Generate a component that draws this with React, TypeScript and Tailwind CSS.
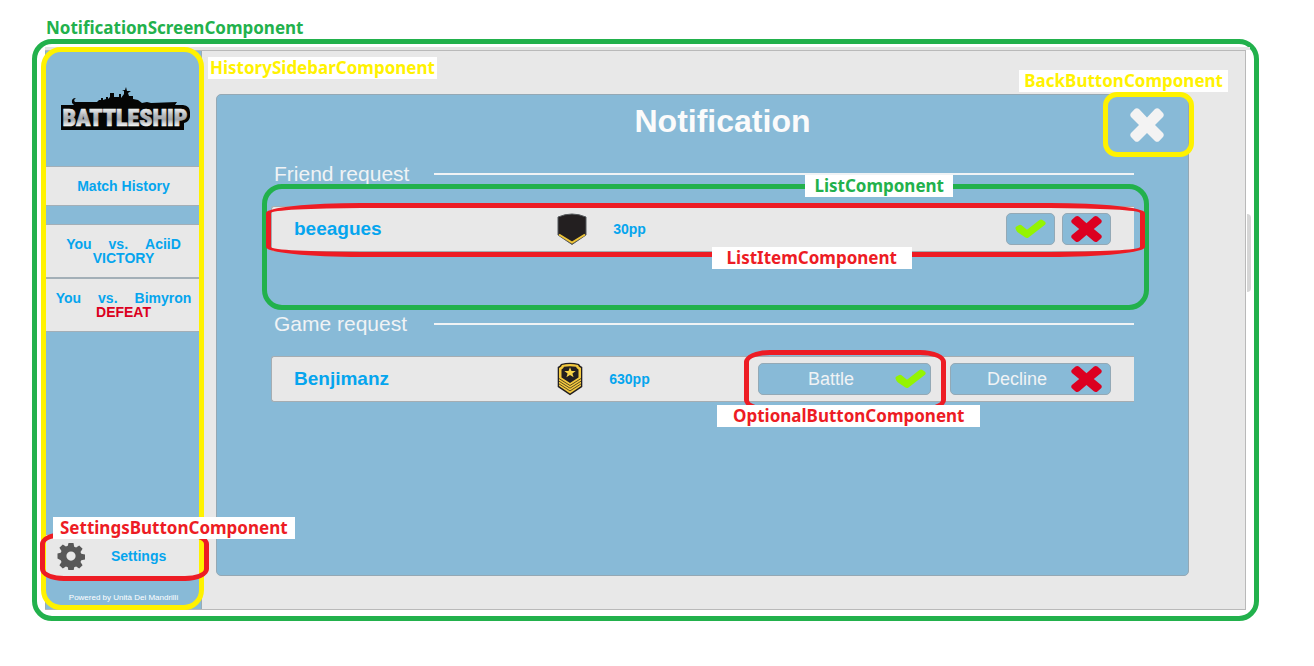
import type { ReactNode } from "react";

const LABEL = "pointer-events-none absolute z-30 whitespace-nowrap bg-white font-['Noto_Sans','Open_Sans',sans-serif] text-[17px] font-bold leading-[22px]";

function Outline({ className }: { className: string }) {
  return <span aria-hidden="true" className={`pointer-events-none absolute border-[5px] ${className}`} />;
}

function Logo() {
  return (
    <svg viewBox="0 0 132 48" className="h-12 w-[132px]" role="img" aria-label="Battleship">
      <defs>
        <linearGradient id="steel" gradientUnits="userSpaceOnUse" x1="0" y1="23" x2="0" y2="42">
          <stop offset="0" stopColor="#f4f5f6" />
          <stop offset="0.35" stopColor="#b9bdc1" />
          <stop offset="0.6" stopColor="#a3a8ad" />
          <stop offset="1" stopColor="#ffffff" />
        </linearGradient>
      </defs>
      <path
        d="M2 20H15L13 18Q12 13 17 13Q14 15 16 17L38 17L40 15H42V13H44V15L47 14V12H49V14L51 12V8H55V12H60V9H62V13L65 9V6L63 5L66 5L67 2L68 6L72 6L69 8L70 11L74 11V14L79 15L83 18L88 17L92 18L118 17L116 20H124Q131 21 131 27V32Q130 37 125 38V45H2Z"
        fill="#050505"
      />
      <text
        x="66"
        y="41"
        textAnchor="middle"
        fontFamily="'Liberation Sans Narrow','Roboto Condensed','Liberation Sans',sans-serif"
        fontWeight="900"
        fontSize="24"
        fill="url(#steel)"
        stroke="url(#steel)"
        strokeWidth="0.7"
      >
        BATTLESHIP
      </text>
    </svg>
  );
}

function Gear() {
  return (
    <svg viewBox="0 0 28 28" className="size-7" fill="#585858" aria-hidden="true">
      <path
        fillRule="evenodd"
        d="M11.5 1h5l.7 3.7 1.9.8 3.1-2.1 3.4 3.4-2.1 3.1.8 1.9 3.7.7v5l-3.7.7-.8 1.9 2.1 3.1-3.4 3.4-3.1-2.1-1.9.8-.7 3.7h-5l-.7-3.7-1.9-.8-3.1 2.1-3.4-3.4 2.1-3.1-.8-1.9L.5 16.500v-5l3.200-.7.8-1.900L2.400 5.800l3.400-3.400 3.100 2.100 1.900-.8zM14 9.500a4.600 4.600 0 1 0 0 9.200a4.600 4.600 0 1 0 0-9.200z"
      />
    </svg>
  );
}

function Cross({ className }: { className: string }) {
  return (
    <svg viewBox="0 0 34 34" preserveAspectRatio="none" className={className} fill="currentColor" aria-hidden="true">
      <path d="M5 .8Q7-.6 9 1L17 9.500L25 1Q27-.6 29 .8L33 5Q34.500 7 33 9L25 17L33 25Q34.500 27 33 29L29 33.200Q27 34.600 25 33L17 25L9 33Q7 34.600 5 33.200L1 29Q-.5 27 1 25L9 17L1 9Q-.5 7 1 5Z" />
    </svg>
  );
}

function Check() {
  return (
    <svg viewBox="0 0 31 20" className="h-5 w-[31px] text-[#94f400]" fill="currentColor" aria-hidden="true">
      <path d="M.6 9.800Q0 8.400 1.400 7.600L4.200 6Q5.400 5.400 6.500 6.300L12 10.800L24.500 1Q26 0 27.500 1L30 2.800Q31.400 4 30 5.800L13.500 18.500Q12 19.600 10.500 18.600L3 13.600Q1.200 12 .6 9.800Z" />
    </svg>
  );
}

function PrivateBadge() {
  return (
    <svg viewBox="0 0 30 32" className="h-8 w-[30px]" role="img" aria-label="Rank: private">
      <path d="M1 4Q8 1 15 1T29 4V22L15 31.500L1 22Z" fill="#231f20" stroke="#55595c" strokeWidth="1" />
      <path d="M2 21.500L15 29.500L28 21.500" fill="none" stroke="#f0c63a" strokeWidth="2" />
    </svg>
  );
}

function SergeantBadge() {
  return (
    <svg viewBox="0 0 26 34" className="h-[34px] w-[26px]" role="img" aria-label="Rank: sergeant">
      <path d="M.7 5Q3 4 4 2Q13-.4 22 2Q23 4 25.300 5V25L13 33.300L.7 25Z" fill="#231f20" />
      <path d="M2 6Q4.500 5 5 3Q13 1 21 3Q21.500 5 24 6V24L13 31.500L2 24Z" fill="#f3c93f" />
      <path d="M4.500 7.500Q6.500 6.500 7 4.800Q13 3.500 19 4.800Q19.500 6.500 21.500 7.500V15.500L13 21L4.500 15.500Z" fill="#231f20" />
      <path d="M13 5.300L14.500 9H18.700L15.400 11.400L16.600 15.200L13 12.900L9.400 15.200L10.600 11.400L7.300 9H11.500Z" fill="#f8d348" />
      <path d="M2 16.500L13 23.500L24 16.500M2 19.200L13 26.200L24 19.200M2 21.900L13 28.900L24 21.900" fill="none" stroke="#4b3d1c" strokeWidth="0.9" />
    </svg>
  );
}

function MatchResult({ opponent, result, won }: { opponent: string; result: string; won: boolean }) {
  return (
    <li className="flex h-[54px] flex-col items-center justify-center border-y border-[#a3afb7] bg-[#e8e8e8] leading-[14px]">
      <div className="flex gap-[17px] text-sm leading-[14px] text-[#05a5ee]">
        <span>You</span>
        <span>vs.</span>
        <span>{opponent}</span>
      </div>
      <div className={won ? "text-sm leading-[14px] text-[#05a5ee]" : "text-sm leading-[14px] text-[#dc0020]"}>{result}</div>
    </li>
  );
}

function HistorySidebar() {
  return (
    <aside className="relative flex w-[157px] shrink-0 flex-col border-x border-[#9aabb5] bg-[#88bad7] font-bold">
      <div className="flex h-[115px] items-center justify-center pl-0.5">
        <Logo />
      </div>
      <h2 className="flex h-10 items-center justify-center border-y border-[#a3afb7] bg-[#e8e8e8] text-sm text-[#05a5ee]">
        Match History
      </h2>
      <ul className="mt-[18px]">
        <MatchResult opponent="AciiD" result="VICTORY" won />
        <MatchResult opponent="Bimyron" result="DEFEAT" won={false} />
      </ul>
      <div className="relative mt-auto">
        <button type="button" className="flex h-[43px] w-full items-center gap-[26px] border-y border-[#a3afb7] bg-[#e8e8e8] pl-[11px] text-sm text-[#05a5ee]">
          <Gear />
          Settings
        </button>
        <Outline className="-left-1.5 -right-2 -top-0.5 -bottom-1 z-20 rounded-[24px_/_12px] border-[#ed1c24]" />
        <span className={`${LABEL} -top-[17px] left-[7px] px-[7px] text-[#ed1c24]`}>SettingsButtonComponent</span>
      </div>
      <p className="h-8 pt-[13px] text-center text-[8px] font-normal leading-4 text-white">Powered by Unità Dei Mandrilli</p>
      <Outline className="-bottom-px -left-[5px] -right-[3px] -top-1 z-10 rounded-[20px] border-[#fff200]" />
      <span className={`${LABEL} left-[162px] top-1.5 px-0.5 text-[#fff200]`}>HistorySidebarComponent</span>
    </aside>
  );
}

const BUTTON = "flex h-8 items-center rounded-[5px] border border-[#93a9b6] bg-[#88bad7] text-lg text-[#f0f3f5]";

function ListItem({ name, badge, points, children }: { name: string; badge: ReactNode; points: string; children: ReactNode }) {
  return (
    <li className="relative flex h-[46px] items-center rounded-l-[3px] border-y border-l border-[#a5adb2] bg-[#e8e8e8] pr-[23px]">
      <span className="w-[34%] pl-[22px] text-[19px] font-bold text-[#05a5ee]">{name}</span>
      {badge}
      <span className="ml-[26px] text-sm font-bold text-[#05a5ee]">{points}</span>
      {children}
    </li>
  );
}

function Section({ title, children }: { title: string; children: ReactNode }) {
  return (
    <section className="min-h-[150px]">
      <div className="flex h-[30px] items-center">
        <h2 className="w-[163px] shrink-0 pl-[3px] text-[21px] leading-7 text-[#f0f3f5]">{title}</h2>
        <hr className="h-0.5 grow border-0 bg-[#f0f3f5]" />
      </div>
      <ul className="relative mt-[17px]">{children}</ul>
    </section>
  );
}

export default function App() {
  return (
    <div className="min-h-screen bg-white pl-8 pr-[55px] font-['Liberation_Sans',Arial,sans-serif]">
      <div className="h-[39px] pl-3.5 pt-4">
        <span className="block font-['Noto_Sans','Open_Sans',sans-serif] text-[17px] font-bold leading-6 text-[#22b14c]">NotificationScreenComponent</span>
      </div>
      <div className="rounded-[20px] border-[5px] border-[#22b14c] pb-1.5 pl-2 pr-2 pt-[3px]">
        <div className="-mr-1 h-[3px] bg-[#e4e4e4]" />
        <div className="relative flex border border-l-0 border-[#b9b9b9] bg-[#e8e8e8]">
          <HistorySidebar />
          <main className="relative mb-[33px] ml-3.5 mr-14 mt-[43px] min-h-[482px] grow rounded-[5px] border border-[#94a8b4] bg-[#88bad7] pl-[54px] pr-[54px]">
            <h1 className="h-16 pl-10 pt-2 text-center text-[32px] font-bold leading-9 text-[#fbfbfb]">Notification</h1>
            <div className="absolute -right-1.5 -top-[3px] z-20 h-[65px] w-[91px]">
              <button type="button" aria-label="Back" className="flex h-full w-full items-center justify-center rounded-[14px] border-[5px] border-[#fff200] pr-1 text-[#f3f3f3]">
                <Cross className="size-[34px]" />
              </button>
              <span className={`${LABEL} -right-[34px] -top-[22px] px-[5px] text-[#fff200]`}>BackButtonComponent</span>
            </div>

            <Section title="Friend request">
              <ListItem name="beeagues" badge={<PrivateBadge />} points="30pp">
                <div className="ml-auto flex gap-[7px]">
                  <button type="button" aria-label="Accept" className={`${BUTTON} w-[49px] justify-center`}>
                    <Check />
                  </button>
                  <button type="button" aria-label="Decline" className={`${BUTTON} w-[49px] justify-center`}>
                    <Cross className="h-[26px] w-[31px] text-[#dc0020]" />
                  </button>
                </div>
                <Outline className="-left-1.5 -right-[11px] -top-1 -bottom-1.5 z-20 rounded-[95px_/_10px] border-[#ed1c24]" />
                <span className={`${LABEL} left-[51%] top-10 px-[15px] text-[#ed1c24]`}>ListItemComponent</span>
              </ListItem>
              <Outline className="-left-[9px] -right-[15px] -top-[22px] z-10 h-[126px] rounded-[20px] border-[#22b14c]" />
              <li role="presentation" className={`${LABEL} -top-[31px] right-[181px] px-[9px] text-[#22b14c]`}>
                ListComponent
              </li>
            </Section>

            <Section title="Game request">
              <ListItem name="Benjimanz" badge={<SergeantBadge />} points="630pp">
                <div className="ml-auto flex gap-[19px]">
                  <div className="relative">
                    <button type="button" className={`${BUTTON} w-[173px] justify-between pl-[49px] pr-1`}>
                      Battle
                      <Check />
                    </button>
                    <Outline className="-left-3.5 -right-[15px] -top-[13px] h-[62px] rounded-[26px_/_12px] border-[#ed1c24]" />
                    <span className={`${LABEL} -left-[41px] top-[42px] px-4 text-[#ed1c24]`}>OptionalButtonComponent</span>
                  </div>
                  <button type="button" className={`${BUTTON} w-[161px] justify-between pl-9 pr-2`}>
                    Decline
                    <Cross className="h-[26px] w-[31px] text-[#dc0020]" />
                  </button>
                </div>
              </ListItem>
            </Section>
          </main>
          <div className="absolute -right-1.5 top-[163px] h-[78px] w-1 rounded-r-sm bg-[#d6d6d6]" />
        </div>
      </div>
    </div>
  );
}
